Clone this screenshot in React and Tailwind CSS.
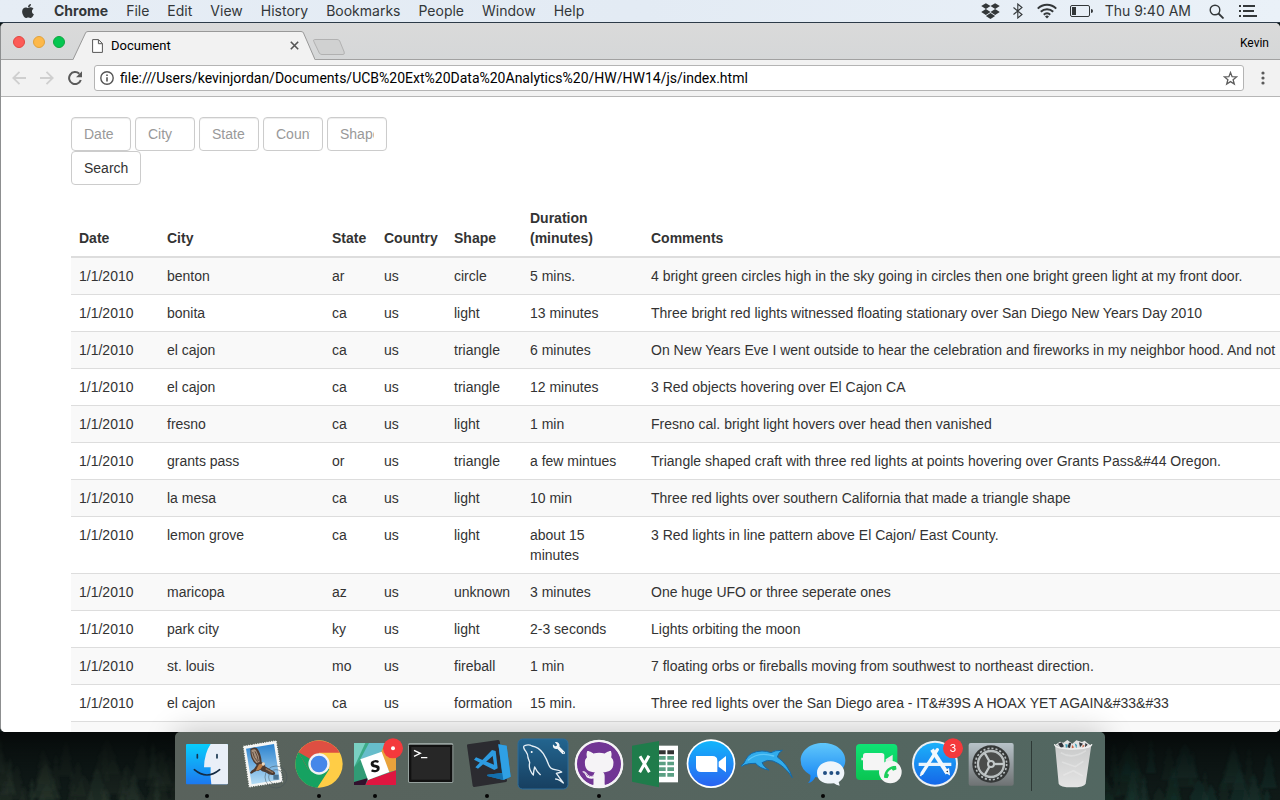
import React from "react";
import { FaApple, FaDropbox, FaGithub, FaWrench, FaPhoneAlt } from "react-icons/fa";

const menus = ["File", "Edit", "View", "History", "Bookmarks", "People", "Window", "Help"];

const rows = [
  ["benton", "ar", "circle", "5 mins.", "4 bright green circles high in the sky going in circles then one bright green light at my front door."],
  ["bonita", "ca", "light", "13 minutes", "Three bright red lights witnessed floating stationary over San Diego New Years Day 2010"],
  ["el cajon", "ca", "triangle", "6 minutes", "On New Years Eve I went outside to hear the celebration and fireworks in my neighbor hood. And not"],
  ["el cajon", "ca", "triangle", "12 minutes", "3 Red objects hovering over El Cajon CA"],
  ["fresno", "ca", "light", "1 min", "Fresno cal. bright light hovers over head then vanished"],
  ["grants pass", "or", "triangle", "a few mintues", "Triangle shaped craft with three red lights at points hovering over Grants Pass&#44 Oregon."],
  ["la mesa", "ca", "light", "10 min", "Three red lights over southern California that made a triangle shape"],
  ["lemon grove", "ca", "light", "about 15 minutes", "3 Red lights in line pattern above El Cajon/ East County."],
  ["maricopa", "az", "unknown", "3 minutes", "One huge UFO or three seperate ones"],
  ["park city", "ky", "light", "2-3 seconds", "Lights orbiting the moon"],
  ["st. louis", "mo", "fireball", "1 min", "7 floating orbs or fireballs moving from southwest to northeast direction."],
  ["el cajon", "ca", "formation", "15 min.", "Three red lights over the San Diego area - IT&#39S A HOAX YET AGAIN&#33&#33"],
];

function MenuBar() {
  return (
    <header className="flex h-[23px] shrink-0 items-center justify-between border-b border-[#2c3a48] bg-linear-to-r from-[#e6edf5] via-[#e3ebf4] to-[#eaf1f8] pr-[23px] pl-5 font-['Inter'] text-[14px] leading-5 text-[#333739]">
      <nav className="flex items-center gap-[18px]">
        <FaApple className="size-4" aria-label="Apple" />
        <button className="font-bold">Chrome</button>
        {menus.map((m) => (
          <button key={m}>{m}</button>
        ))}
      </nav>
      <div className="flex items-center">
        <FaDropbox className="mr-3 h-[18px] w-[19px]" />
        <svg className="mr-[13px] h-4 w-3" viewBox="0 0 12 16" fill="none" stroke="currentColor" strokeWidth="1.1">
          <path d="M1.500 4.500 10 11.500 5.800 15V1L10 4.500 1.500 11.500" />
        </svg>
        <svg className="mr-[13px] h-4 w-5" viewBox="0 0 20 16" fill="none" stroke="currentColor" strokeWidth="2">
          <path d="M.8 5.600a13 13 0 0 1 18.400 0M3.800 8.700a8.800 8.800 0 0 1 12.400 0M6.800 11.700a4.500 4.500 0 0 1 6.400 0" />
          <path d="M10 15.500 8 13.400a3 3 0 0 1 4 0z" fill="currentColor" stroke="none" />
        </svg>
        <svg className="mr-3 h-3 w-[23px]" viewBox="0 0 23 12">
          <rect x=".5" y=".5" width="19" height="11" rx="1.500" fill="none" stroke="currentColor" />
          <rect x="2" y="2" width="4" height="8" fill="currentColor" />
          <path d="M21 4q2 0 2 2t-2 2z" fill="currentColor" />
        </svg>
        <span className="mr-[18px]">Thu 9:40 AM</span>
        <button aria-label="Spotlight" className="mr-[15px]">
          <svg className="size-[15px]" viewBox="0 0 15 15" fill="none" stroke="currentColor" strokeWidth="1.400">
            <circle cx="6" cy="6" r="4.800" />
            <path d="m9.500 9.500 5 5" strokeWidth="1.800" />
          </svg>
        </button>
        <button aria-label="Notification Center">
          <svg className="h-3 w-[18px]" viewBox="0 0 18 12" stroke="currentColor" strokeWidth="2">
            <path d="M0 1h2M4 1h12M0 6h2M4 6h11M0 11h2M4 11h14" />
          </svg>
        </button>
      </div>
    </header>
  );
}

function TabStrip() {
  return (
    <div className="flex h-[37px] shrink-0 items-end bg-linear-to-b from-[#dadada] to-[#d5d7d8] shadow-[inset_0_-1px_0_#a1a1a1]">
      <div className="flex h-full w-[72px] items-center gap-2 pl-3">
        <button aria-label="Close" className="size-3 rounded-full border border-[#e2463f] bg-[#fc5b57]" />
        <button aria-label="Minimize" className="size-3 rounded-full border border-[#e1a23a] bg-[#fdb849]" />
        <button aria-label="Zoom window" className="size-3 rounded-full border border-[#0fa63f] bg-[#04c651]" />
      </div>
      <div className="relative flex h-[29px] w-[242px] items-center pr-4 pl-[19px] font-['Roboto'] text-[13px] text-black">
        <svg className="absolute inset-0 size-full" viewBox="0 0 242 29" aria-hidden="true">
          <path d="M0 29 12.500 2Q13 .5 15 .5H228q2 0 2.500 1.500L242 29z" fill="#f2f2f2" />
          <path d="M0 28.500 12.500 2Q13 .5 15 .5H228q2 0 2.500 1.500L242 28.500" fill="none" stroke="#999" />
        </svg>
        <svg className="relative mr-2 h-[14px] w-[11px]" viewBox="0 0 11 14" fill="#fff" stroke="#555">
          <path d="M.6.600h5.900l3.900 3.900v8.900H.6zM6.400.800v3.900h3.900" />
        </svg>
        <span className="relative flex-1">Document</span>
        <button aria-label="Close tab" className="relative">
          <svg className="size-[9px]" viewBox="0 0 9 9" stroke="#555" strokeWidth="1.600">
            <path d="m.8.800 7.400 7.400m0-7.400L.8 8.200" />
          </svg>
        </button>
      </div>
      <button aria-label="New tab" className="-ml-[3px] mb-1">
        <svg className="h-[18px] w-[34px]" viewBox="0 0 34 18" fill="#d0d1d1" stroke="#b1b1b1">
          <path d="M2.500 1.500H25q2 0 2.700 1.500l4.500 11q.7 2.500-1.200 2.500H10q-2 0-2.700-1.500L1.800 3.500q-.8-2 .7-2z" />
        </svg>
      </button>
      <button className="mb-[7px] ml-auto pr-[11px] font-['Roboto'] text-[12px] leading-5 text-black">Kevin</button>
    </div>
  );
}

function Toolbar() {
  return (
    <div className="flex h-[37px] shrink-0 items-center border-b border-[#b6b6b6] bg-[#f2f2f2] pl-[11px]">
      <button aria-label="Back" className="mr-[14px]">
        <svg className="size-[14px]" viewBox="0 0 14 14" fill="none" stroke="#cfcfcf" strokeWidth="1.800"><path d="M14 7H1.500M7.500.8 1.300 7l6.200 6.200" /></svg>
      </button>
      <button aria-label="Forward" className="mr-[14px]">
        <svg className="size-[14px]" viewBox="0 0 14 14" fill="none" stroke="#cfcfcf" strokeWidth="1.800"><path d="M0 7h12.500M6.500.8 12.700 7l-6.200 6.200" /></svg>
      </button>
      <button aria-label="Reload" className="mr-3">
        <svg className="size-[14px]" viewBox="0 0 14 14" fill="none" stroke="#5a5a5a" strokeWidth="2"><path d="M12.800 9A6 6 0 1 1 11.300 2.800" /><path d="M14 .2v6H8z" fill="#5a5a5a" stroke="none" /></svg>
      </button>
      <div className="flex h-[26px] flex-1 items-center rounded-[3px] border border-[#b4b4b4] bg-white px-[5px]">
        <svg className="size-[14px]" viewBox="0 0 14 14" fill="none" stroke="#555" strokeWidth="1.400" aria-hidden="true">
          <circle cx="7" cy="7" r="6.200" /><path d="M7 6.200V10.500M7 3.400V5" strokeWidth="1.600" />
        </svg>
        <input
          aria-label="Address"
          className="ml-[6px] min-w-0 flex-1 bg-transparent font-['Roboto'] text-[14px] leading-5 text-black outline-none"
          defaultValue="file:///Users/kevinjordan/Documents/UCB%20Ext%20Data%20Analytics%20/HW/HW14/js/index.html"
        />
        <button aria-label="Bookmark this page">
          <svg className="size-[15px]" viewBox="0 0 15 15" fill="none" stroke="#5f5f5f" strokeWidth="1.300"><path d="m7.500 1.500 1.600 4.200 4.500.2L10.100 8.700l1.200 4.400-3.800-2.500-3.800 2.500 1.200-4.400L1.400 5.900l4.500-.2z" /></svg>
        </button>
      </div>
      <button aria-label="Chrome menu" className="mr-[15px] ml-[17px]">
        <svg className="h-[14px] w-1" viewBox="0 0 4 14" fill="#5a5a5a"><circle cx="2" cy="2" r="1.600" /><circle cx="2" cy="7" r="1.600" /><circle cx="2" cy="12" r="1.600" /></svg>
      </button>
    </div>
  );
}

function Page() {
  return (
    <main className="min-h-0 flex-1 overflow-hidden bg-white pt-5 pl-[70px] font-['Liberation_Sans'] text-[14px] leading-5 text-[#333]">
      <form className="flex flex-col items-start" onSubmit={(e) => e.preventDefault()}>
        <div className="flex gap-1">
          {["Date", "City", "State", "Country", "Shape"].map((f) => (
            <input
              key={f}
              aria-label={f}
              placeholder={f}
              className="h-[34px] w-[60px] rounded-[4px] border border-[#ccc] bg-white px-3 py-[6px] shadow-[inset_0_1px_1px_rgba(0,0,0,0.075)] placeholder:text-[#999]"
            />
          ))}
        </div>
        <button className="h-[34px] rounded-[4px] border border-[#ccc] bg-white px-3 py-[6px]">Search</button>
      </form>
      <table className="mt-[15px] w-full table-fixed border-collapse text-left">
        <colgroup>
          <col className="w-[88px]" />
          <col className="w-[165px]" />
          <col className="w-[52px]" />
          <col className="w-[70px]" />
          <col className="w-[76px]" />
          <col className="w-[121px]" />
          <col />
        </colgroup>
        <thead>
          <tr className="border-b-2 border-[#ddd]">
            {["Date", "City", "State", "Country", "Shape", "Duration (minutes)", "Comments"].map((h) => (
              <th key={h} className="p-2 align-bottom font-bold">{h}</th>
            ))}
          </tr>
        </thead>
        <tbody>
          {rows.map(([city, state, shape, duration, comments], i) => (
            <tr key={i} className="border-b border-[#ddd] odd:bg-[#f9f9f9]">
              <td className="p-2 align-top">1/1/2010</td>
              <td className="p-2 align-top">{city}</td>
              <td className="p-2 align-top">{state}</td>
              <td className="p-2 align-top">us</td>
              <td className="p-2 align-top">{shape}</td>
              <td className="p-2 align-top">{duration}</td>
              <td className="p-2 align-top whitespace-nowrap">{comments}</td>
            </tr>
          ))}
          <tr className="odd:bg-[#f9f9f9]">
            <td className="h-9" colSpan={7} />
          </tr>
        </tbody>
      </table>
    </main>
  );
}

function Badge({ label }) {
  return (
    <g>
      <circle cx="138" cy="49" r="30" fill="#f4393c" />
      {label ? (
        <text x="138" y="60" textAnchor="middle" fontSize="33" fontFamily="Inter" fill="#fff">{label}</text>
      ) : (
        <circle cx="138" cy="49" r="6" fill="#fff" />
      )}
    </g>
  );
}

const dock = [
  ["Finder", true, <>
    <rect x="21" y="36" width="126" height="121" rx="3" fill="url(#finder)" />
    <path d="M95 36h49q3 0 3 3v115q0 3-3 3H97q-4-24-2-51H75q1-42 20-70z" fill="#e9eff8" />
    <path d="M55 68v10M114 68v10" stroke="#15344f" strokeWidth="5" strokeLinecap="round" />
    <path d="M46 113q38 32 76 0" fill="none" stroke="#142b44" strokeWidth="5" strokeLinecap="round" />
  </>],
  ["Mail", false, <>
    <path d="m23 41 102-17 20 127-104 16z" fill="#f6f6f4" />
    <path d="m23 41 102-17 20 127-104 16z" fill="none" stroke="#566159" strokeWidth="5" strokeDasharray="0 7" strokeLinecap="round" />
    <path d="m33 50 84-14 17 107-84 14z" fill="url(#mail)" />
    <path d="M46 51q12-8 20-2 13 16 14 42l7 2q6 5 3 10l28 16q5 6 0 9-14 3-26-7-13-3-16-8-6 5-12 4-7 2-12 7-4 3-7-2 4-7 12-11l8-12q-21-16-19-48z" fill="#4d3a30" />
    <path d="M49 54q10-5 14 0 10 16 11 36l-10 3Q49 78 49 54z" fill="#a58f7c" />
    <path d="M53 60q3 18 15 29M60 58q8 14 10 29" fill="none" stroke="#5d4a3e" strokeWidth="3" />
    <path d="M72 97q9-3 13 2l-8 11q-7 6-15 6z" fill="#ba7d48" />
    <path d="m92 110 22 12" stroke="#977355" strokeWidth="4" />
    <circle cx="85" cy="96" r="5" fill="#ead8c0" />
    <g fill="none" stroke="#46535a" strokeWidth="3" opacity=".5"><circle cx="123" cy="135" r="33" /><circle cx="123" cy="135" r="22" /></g>
    <rect x="115" y="128" width="16" height="15" fill="#27506f" opacity=".7" />
  </>],
  ["Chrome", true, <>
    <circle cx="84" cy="96" r="71" fill="#ffcd46" />
    <path d="M84 96 22.500 60.500A71 71 0 0 0 79 167l36-55z" fill="#16a261" />
    <path d="M22.500 60.500A71 71 0 0 1 146 62H84L53 114z" fill="#de4f42" />
    <path d="M22.500 60.500 53 114l31-18V62z" fill="#de4f42" />
    <path d="M22.500 60.500 53 114l18 10 13-28z" fill="#16a261" />
    <circle cx="84" cy="96" r="32" fill="#f3f3f3" /><circle cx="84" cy="96" r="25" fill="#4687e9" />
  </>],
  ["Slack", true, <>
    <rect x="21" y="33" width="126" height="126" rx="5" fill="#3dab88" />
    <path d="M21 33h34l-34 73z" fill="#7ad0c2" />
    <path d="M66 33h49L101 63 39 83z" fill="#67bdcb" />
    <path d="M115 33h32v82l-20 5-26-57z" fill="#e9a23b" />
    <path d="m21 106 20-22 22 60-42 15z" fill="#319b75" />
    <path d="m63 144 84-29v44H55z" fill="#df1640" />
    <path d="m21 150 42-12-8 21H21z" fill="#32102d" />
    <path d="m40 82 64-23 23 61-64 24z" fill="#fff" />
    <text x="84" y="120" textAnchor="middle" fontSize="68" fontWeight="900" fontFamily="Lato" fill="#151515" transform="rotate(-6 84 100)">s</text>
    <Badge />
  </>],
  ["Terminal", false, <>
    <rect x="15" y="33" width="136" height="120" rx="5" fill="#96a19e" /><rect x="18" y="38" width="130" height="112" rx="2" fill="#111" /><rect x="25" y="45" width="116" height="98" fill="#272727" />
    <path d="m33 55 19 9-19 9M54 77h19" fill="none" stroke="#fff" strokeWidth="4" />
  </>],
  ["Visual Studio Code", true, <>
    <path d="m27 37 90-13q4 0 5 4l22 117q1 4-3 5L46 165q-4 0-5-4L24 41q0-4 3-4z" fill="#2b2b30" />
    <path d="m118 37 25 4 12 93-22 10-48-12v-4l44-5z" fill="#1b86cc" />
    <path d="m118 37 25 4 12 93-22 10z" fill="#2fa0e4" />
    <path d="m85 128 44-5 4 21-48-12z" fill="#1470ad" />
    <path d="M99 54 110 57l6 52-10 5-61-31 6-7 54 22-4-26-44 38-8-4z" fill="#2d9be0" />
  </>],
  ["MySQL Workbench", false, <>
    <rect x="9" y="21" width="150" height="150" rx="14" fill="url(#mysql)" stroke="#2c6c9b" strokeWidth="3" />
    <path d="M33 59q-12-16-4-18 12-5 22 1 20 3 34 23 10 16 16 33 5 13 19 15 14 2 20 7-9 2-16 4l21 29q-13-11-23-12M33 59q6 8 6 18l5 14q-3 16 3 26 4 9 8 12 1-13 4-24 7 15 17 23" fill="none" stroke="#e6eff5" strokeWidth="4" strokeLinecap="round" strokeLinejoin="round" />
    <circle cx="50" cy="60" r="3" fill="#fff" />
    <g transform="translate(150 30) scale(-1 1)"><FaWrench size="37" color="#f1f5f7" /></g>
  </>],
  ["GitHub Desktop", true, <>
    <circle cx="84" cy="96" r="73" fill="#f5f3f6" />
    <g transform="translate(15 27)"><FaGithub size="138" color="#713594" /></g>
    <circle cx="84" cy="96" r="69" fill="none" stroke="#f5f3f6" strokeWidth="6" />
  </>],
  ["Excel", false, <>
    <path d="M94 41h59v110H94z" fill="#fff" />
    <g fill="#5a9f83"><path d="M96 72h20v11H96zM121 72h20v11h-20zM96 89h20v11H96zM121 89h20v11h-20zM96 106h20v11H96zM121 106h20v11h-20zM96 123h20v11H96zM121 123h20v11h-20z" /></g>
    <path d="M96 55h20v12H96zM121 55h20v12h-20z" fill="#333" />
    <path d="m15 41 81-14v139l-81-17z" fill="#1f7c4b" />
    <path d="m39 73 28 48M66 71 38 121" stroke="#fff" strokeWidth="9" />
  </>],
  ["Zoom", false, <>
    <circle cx="84" cy="95" r="73" fill="#fff" /><circle cx="84" cy="95" r="68" fill="url(#zoom)" />
    <path d="M39 72h49q15 0 15 14v34H54q-15 0-15-14zM107 89l22-17v49l-22-17z" fill="#fff" />
  </>],
  ["Dolphin", false, <>
    <path d="M6 101q11-7 14-18 12-25 49-26 14 0 27 5 12-8 34-7-12 7-15 20 32 22 45 62-23-37-58-50-16-6-33 5 5 13 21 22-28-4-40-20-21-1-34 5-8 6-10 2z" fill="#31acec" stroke="#1469a8" strokeWidth="3" strokeLinejoin="round" />
    <path d="M28 84q32-26 76-12" fill="none" stroke="#5cc6f8" strokeWidth="4" strokeLinecap="round" />
  </>],
  ["Messages", true, <>
    <path d="M84 33c38 0 67 22 67 52s-29 53-67 53q-13 0-23-3-8 17-22 18 9-9 7-24-29-16-29-44c0-30 29-52 67-52z" fill="url(#msg)" />
    <path d="M107 88c23 0 41 15 41 34 0 12-7 22-17 28l3 11q-11-1-17-7-51 4-51-32c0-19 18-34 41-34z" fill="#eff5fa" />
    <g fill="#214f83"><circle cx="90" cy="123" r="6" /><circle cx="109" cy="123" r="6" /><circle cx="128" cy="123" r="6" /></g>
  </>],
  ["FaceTime", false, <>
    <rect x="15" y="36" width="124" height="108" rx="12" fill="url(#face)" />
    <rect x="36" y="63" width="64" height="52" rx="8" fill="#f5f5f5" /><path d="m104 82 21-14v40l-21-11zM31 77h6v8h-6z" fill="#ececec" />
    <circle cx="118" cy="120" r="34" fill="#f5f5f5" />
    <g transform="rotate(90 118 120) translate(99 101)"><FaPhoneAlt size="38" color="#1bcf5b" /></g>
  </>],
  ["App Store", false, <>
    <circle cx="84" cy="95" r="69" fill="#edf0f2" /><circle cx="84" cy="95" r="63" fill="url(#app)" />
    <path d="M35 97h98" stroke="#e8f3fc" strokeWidth="10" />
    <path d="M91 53 45 124" stroke="#f3f8fc" strokeWidth="10" strokeLinecap="round" /><path d="m75 53 46 71" stroke="#f3f8fc" strokeWidth="12" />
    <path d="m116 116 8-4 2 14-12-7zM45 124l-5 8" stroke="#f3f8fc" strokeWidth="5" />
    <Badge label="3" />
  </>],
  ["System Preferences", false, <>
    <rect x="17" y="33" width="135" height="128" rx="6" fill="url(#prefs)" />
    <circle cx="84" cy="96" r="56" fill="#353838" />
    <circle cx="84" cy="96" r="47" fill="none" stroke="#b7bdbf" strokeWidth="5" strokeDasharray="6.300 6" />
    <circle cx="84" cy="96" r="39" fill="#4a4c4b" stroke="#b9bfc0" strokeWidth="7" />
    {[0, 120, 240].map((k) => <path key={k} d="M84 96h38" stroke="#c3c9ca" strokeWidth="7" transform={`rotate(${k} 84 96)`} />)}
    <circle cx="84" cy="96" r="12" fill="#c3c9ca" /><circle cx="84" cy="96" r="6" fill="#444" />
  </>],
];

const trash = <>
  <path d="M33 39 44 155q3 11 40 11t41-11l17-116q-54 18-109 0z" fill="url(#trash)" />
  <path d="m34 38 14-9 10 3 12-8 15 11 12-10 17 5 8-4 9 8 11 7q-52 21-108-3z" fill="#e2e3e3" />
  <path d="m42 35 11-4 7 12-9 5zM75 32l7 1-4 15-8-2zM105 31l12 4-9 11zM124 33l7 5-8 8z" fill="#30343a" />
  <path d="m64 36 8 2-6 12zM92 34l7 5-2 11z" fill="#3a9eb8" /><path d="m84 38 6 8-7 5zM116 38l6 3-7 7z" fill="#cc6848" />
  <path d="M32 38q4 12 55 13 50-1 56-13" fill="none" stroke="#efefef" strokeWidth="4" strokeLinecap="round" />
  <path d="M50 62q34 22 76-6M54 90l40 14 24-16M58 130l30-14 28 16" fill="none" stroke="#f1f1f1" strokeWidth="5" opacity=".4" />
</>;

const gradients = [
  ["finder", "#08cdfc", "#1d78ef"],
  ["mail", "#2c83cf", "#b5dcf4"],
  ["mysql", "#23658f", "#173f60"],
  ["zoom", "#12b5fb", "#2a63f1"],
  ["msg", "#60c7fb", "#1382f3"],
  ["face", "#0fe375", "#0ac552"],
  ["app", "#1cb1f9", "#1567e8"],
  ["prefs", "#b8c3c9", "#6e7273"],
  ["trash", "#c9caca", "#e4e4e4"],
];

function DockItem({ name, running, children }) {
  return (
    <button aria-label={name} className="h-[68px] w-14 shrink-0">
      <svg className="size-full overflow-visible" viewBox="0 0 168 204">
        {children}
        {running && <circle cx="84" cy="192" r="6" fill="#050505" />}
      </svg>
    </button>
  );
}

const trees = Array.from({ length: 260 }, (_, i) => {
  const x = (i * 83 + ((i * i) % 29)) % 1280;
  const y = 6 + ((i * 37) % 56);
  const w = 3 + ((i * 7) % 4);
  return { x, d: `M${x} ${y}l${w} 9h-2l${w} 10h-2l${w} 16h-${w * 6 - 8}l${w} -16h-2l${w} -10h-2z` };
});

function Desktop() {
  return (
    <footer className="relative flex h-[68px] shrink-0 justify-center bg-[#101a18]">
      <svg className="absolute inset-0 size-full" viewBox="0 0 1280 68" preserveAspectRatio="none" aria-hidden="true">
        <defs>
          <linearGradient id="shade" x2="0" y2="1"><stop stopColor="#050808" stopOpacity=".9" /><stop offset="1" stopColor="#0b1413" stopOpacity="0" /></linearGradient>
          <filter id="soft"><feGaussianBlur stdDeviation="1" /></filter>
          {gradients.map(([id, a, b]) => (
            <linearGradient key={id} id={id} x2="0" y2="1"><stop stopColor={a} /><stop offset="1" stopColor={b} /></linearGradient>
          ))}
        </defs>
        <g filter="url(#soft)">
          {trees.map((t, i) => <path key={i} d={t.d} fill={t.x < 640 ? "#2b382e" : "#173430"} opacity={i % 3 ? 0.3 : 0.55} />)}
        </g>
        <rect width="1280" height="68" fill="url(#shade)" />
      </svg>
      <div className="relative flex rounded-t-[5px] bg-linear-to-r from-[#59625c] to-[#526761] pr-[5px] pl-1 shadow-[0_0_30px_rgba(0,0,0,0.22)]">
        {dock.map(([name, running, art]) => (
          <DockItem key={name} name={name} running={running}>{art}</DockItem>
        ))}
        <div className="mx-3 mt-[9px] h-[50px] w-px bg-[#2e3936]" />
        <DockItem name="Trash">{trash}</DockItem>
      </div>
    </footer>
  );
}

export default function App() {
  return (
    <div className="flex h-screen flex-col overflow-hidden bg-[#0d1716]">
      <MenuBar />
      <section className="flex min-h-0 flex-1 flex-col overflow-hidden rounded-[5px] border-l border-[#8d8f90] bg-[#f2f2f2]">
        <TabStrip />
        <Toolbar />
        <Page />
      </section>
      <Desktop />
    </div>
  );
}
